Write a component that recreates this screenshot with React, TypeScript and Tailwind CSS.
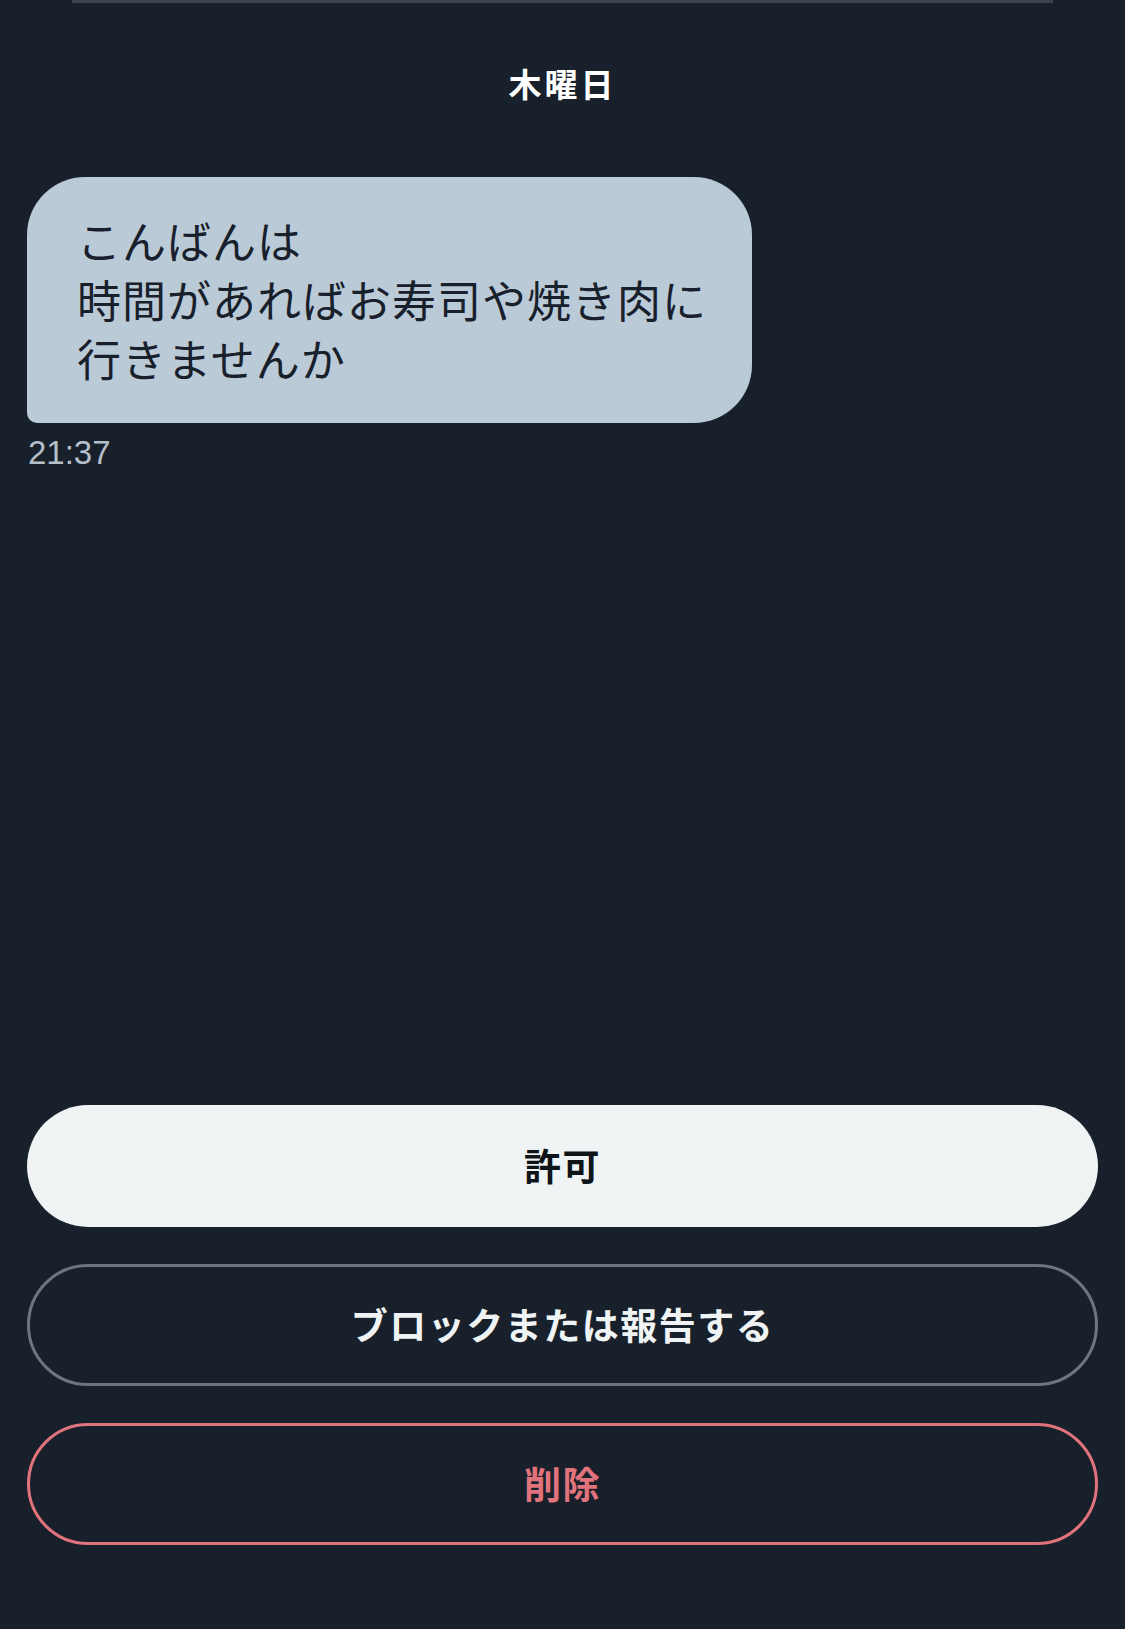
const JP = "font-['Noto_Sans_CJK_JP','Noto_Sans',sans-serif]";

function ActionButton({
  label,
  variant,
}: {
  label: string;
  variant: "primary" | "outline" | "danger";
}) {
  const styles = {
    primary: "bg-[#eff3f4] text-[#0f1419]",
    outline: "border-[3px] border-[#6b7682] text-[#eff3f4]",
    danger: "border-[3px] border-[#e0737c] text-[#e0737c]",
  }[variant];

  return (
    <button
      type="button"
      className={`flex h-[122px] w-full items-center justify-center rounded-full text-[37px] font-bold tracking-[1.5px] ${JP} ${styles}`}
    >
      {label}
    </button>
  );
}

export default function App() {
  return (
    <div className="flex min-h-[1629px] w-full flex-col bg-[#18202b]">
      <div className="mx-[72px] h-[3px] bg-[#3c4450]" />

      <div className="flex flex-1 flex-col">
        <div className={`mt-[60px] text-center text-[33px] font-bold leading-[40px] tracking-[3px] text-white ${JP}`}>
          木曜日
        </div>

        <div className="mt-[74px] px-[27px]">
          <div
            className={`w-[725px] whitespace-nowrap rounded-[58px] rounded-bl-[10px] bg-[#bacad7] pb-[35px] pl-[50px] pt-[34px] text-[44px] leading-[59px] tracking-[1px] text-[#18202b] ${JP}`}
          >
            <p>こんばんは</p>
            <p>時間があればお寿司や焼き肉に</p>
            <p>行きませんか</p>
          </div>
          <div className="mt-[10px] pl-px font-['Liberation_Sans',sans-serif] text-[33px] leading-[40px] text-[#b4bfca]">
            21:37
          </div>
        </div>
      </div>

      <div className="flex flex-col gap-[37px] px-[27px] pb-[84px]">
        <ActionButton label="許可" variant="primary" />
        <ActionButton label="ブロックまたは報告する" variant="outline" />
        <ActionButton label="削除" variant="danger" />
      </div>
    </div>
  );
}
